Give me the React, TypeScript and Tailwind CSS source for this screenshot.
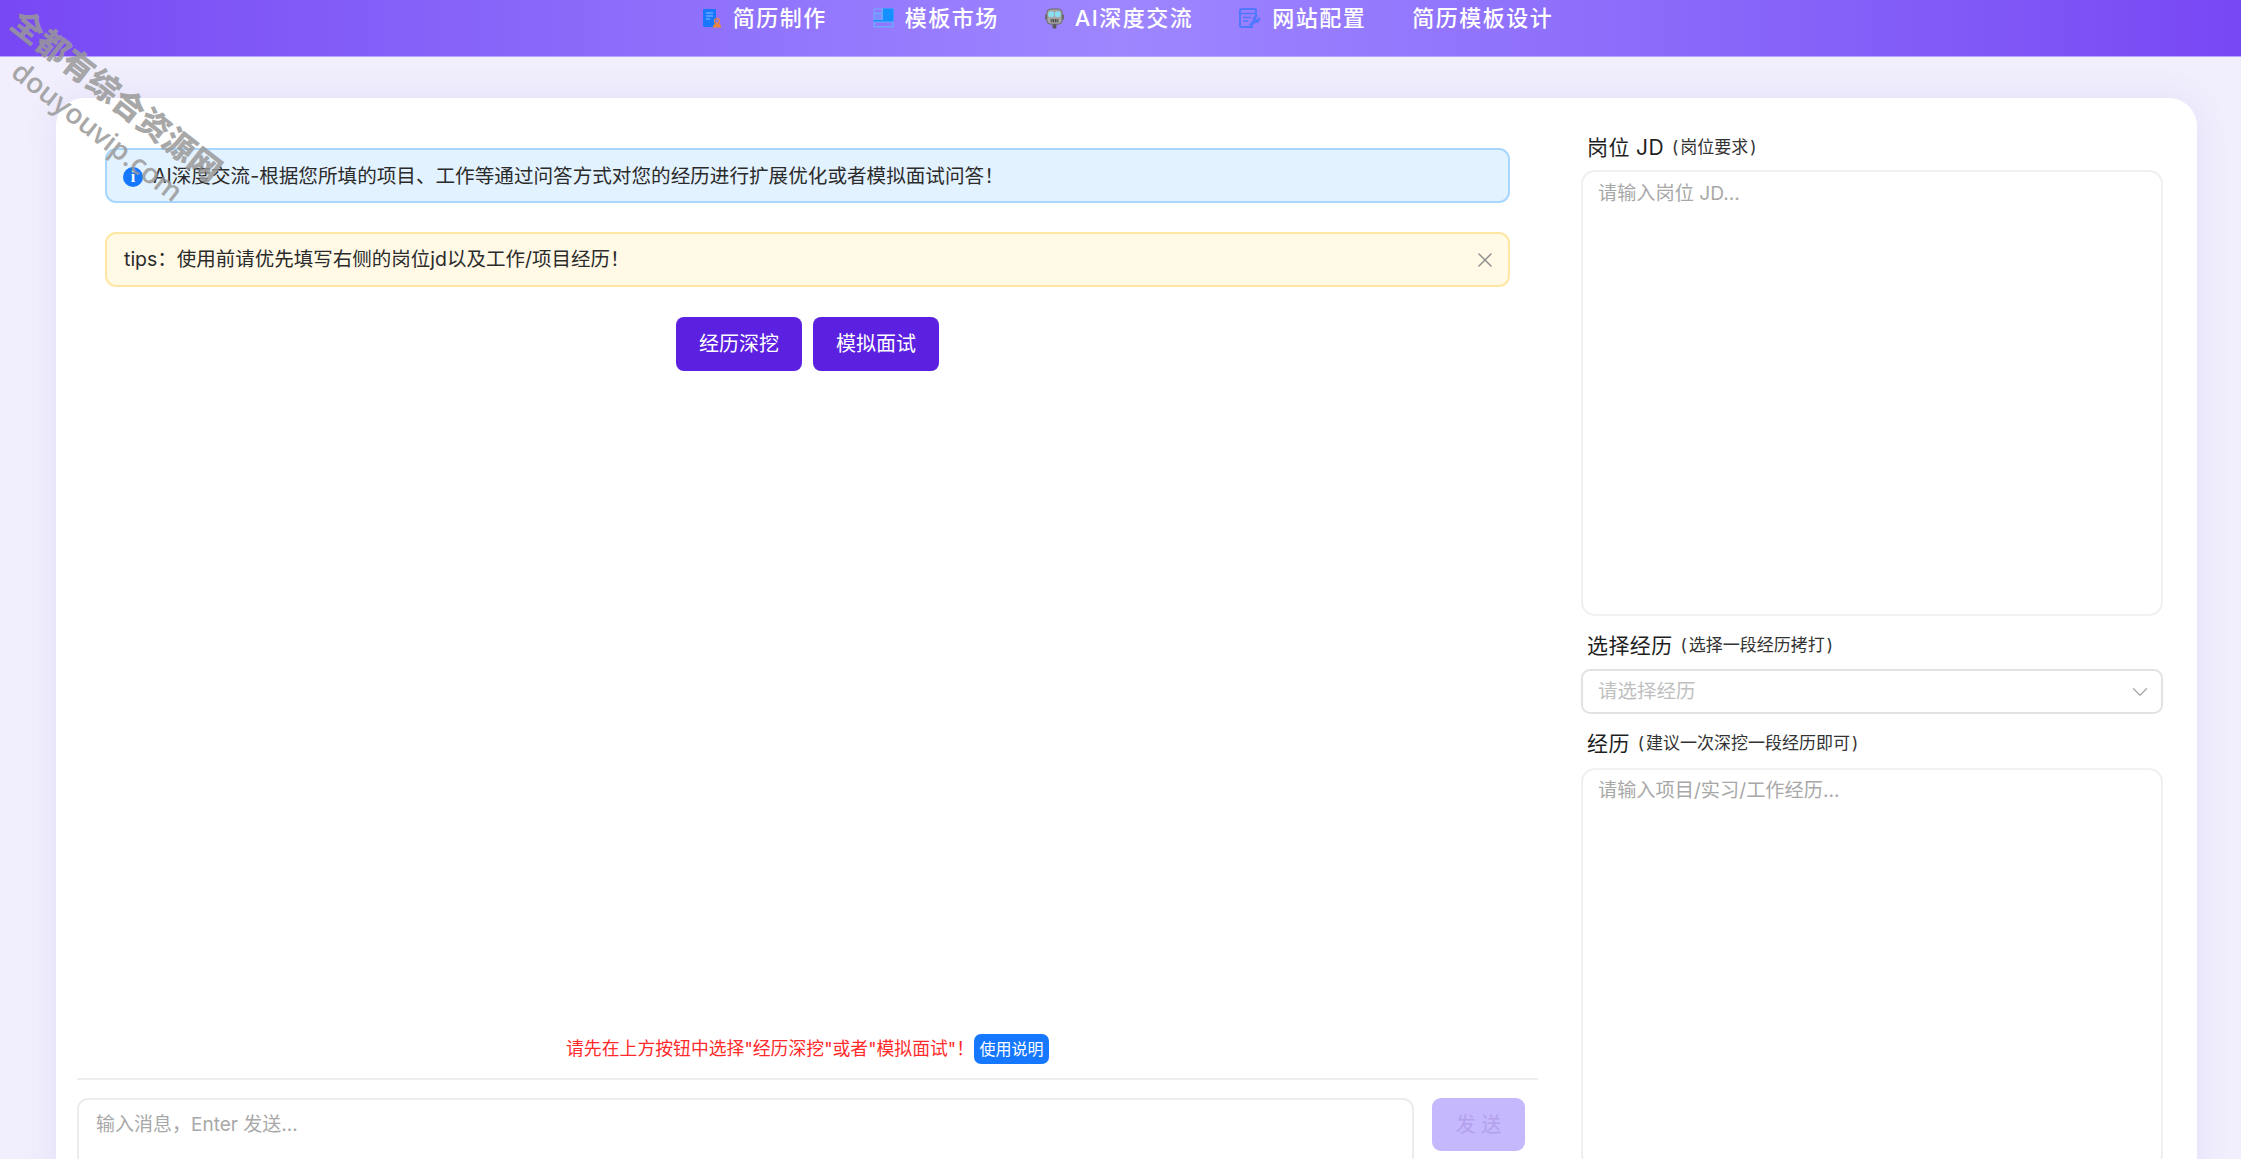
import React from 'react';
import { ChevronDown, X } from 'lucide-react';

const FONT = "font-['Inter','Noto_Sans_CJK_SC',sans-serif]";

const DocUserIcon = () => (
  <svg viewBox="0 0 20 20" className="h-[20px] w-[20px]">
    <path d="M2 1h11a1 1 0 0 1 1 1v16a1 1 0 0 1-1 1H2a1 1 0 0 1-1-1V2a1 1 0 0 1 1-1z" fill="#1677ff" />
    <path d="M4 5h7M4 8h7M4 11h4" stroke="#8fc1ff" strokeWidth="1" />
    <circle cx="15" cy="13" r="2.4" fill="none" stroke="#e8853f" strokeWidth="1.4" />
    <path d="M11 19.5v-1.2c0-1.6 1.6-2.6 4-2.6s4 1 4 2.6v1.2z" fill="#e8853f" />
  </svg>
);

const TemplateIcon = () => (
  <svg viewBox="0 0 21 20" className="h-[20px] w-[21px]">
    <rect x="0.5" y="0.5" width="20" height="19" fill="#6fa8ff" />
    <rect x="1.5" y="1.5" width="7" height="3" fill="#8f78ff" />
    <rect x="1.5" y="6" width="7" height="5.5" fill="#7f8cff" />
    <rect x="10" y="0.5" width="10.5" height="11.5" fill="#1590ff" />
    <rect x="0.5" y="12" width="20" height="1.5" fill="#1590ff" />
    <rect x="2" y="14.5" width="17" height="3.5" fill="#8f78ff" />
  </svg>
);

const RobotIcon = () => (
  <svg viewBox="0 0 20 22" className="h-[21px] w-[19px]">
    <rect x="0" y="7" width="2" height="5" fill="#6b6b6b" />
    <rect x="18" y="7" width="2" height="5" fill="#6b6b6b" />
    <rect x="2" y="1" width="16" height="16" rx="4" fill="#a6a6a6" stroke="#666666" strokeWidth="1" />
    <rect x="3.5" y="3.5" width="6" height="6" rx="2" fill="#86e0f0" />
    <rect x="10.5" y="3.5" width="6" height="6" rx="2" fill="#86e0f0" />
    <rect x="6" y="11.5" width="8" height="3.5" fill="#4a4a4a" />
    <path d="M7.5 11.5v3.5M10 11.5v3.5M12.5 11.5v3.5" stroke="#b8b8b8" strokeWidth="0.7" />
    <rect x="8" y="17" width="4" height="4.5" fill="#5a5a5a" />
  </svg>
);

const ConfigIcon = () => (
  <svg viewBox="0 0 22 21" className="h-[21px] w-[22px]" fill="none" stroke="#4f78ff" strokeWidth="2">
    <path d="M14 19H2.5A1.5 1.5 0 0 1 1 17.5v-15A1.5 1.5 0 0 1 2.5 1h13A1.5 1.5 0 0 1 17 2.5V8" />
    <path d="M1 5.5h16M4 9.5h8M4 13h5" strokeWidth="1.6" />
    <path d="M20.5 9.5l-2.5 2.3-1.6-1.6 2.2-2.4a3.6 3.6 0 0 0-4.4 4.6l-4 4.2 2 2 4.2-4a3.6 3.6 0 0 0 4.1-5.1z" fill="#4f78ff" strokeWidth="0.6" />
  </svg>
);

const navItems = [
  { icon: <DocUserIcon />, label: '简历制作' },
  { icon: <TemplateIcon />, label: '模板市场' },
  { icon: <RobotIcon />, label: 'AI深度交流' },
  { icon: <ConfigIcon />, label: '网站配置' },
  { icon: null, label: '简历模板设计' },
];

const FieldLabel = ({ title, hint }: { title: string; hint: string }) => (
  <div className="flex h-[30px] items-center gap-[8px] pl-[6px]">
    <span className="text-[21px] leading-none text-[#1f1f1f] tracking-[0.4px]">{title}</span>
    <span className="text-[17px] leading-none text-[#333333]">
      (<span className="mx-[2px]">{hint}</span>)
    </span>
  </div>
);

export default function App() {
  return (
    <div className={`relative h-screen overflow-hidden bg-[#f1effd] ${FONT}`}>
      {/* Header */}
      <header className="flex h-[57px] items-start justify-center gap-[46px] border-b border-[#b9a4fb] bg-gradient-to-r from-[#7847f4] via-[#9e86ff] to-[#7847f4] pl-[14px] pt-[6px]">
        {navItems.map((item) => (
          <div key={item.label} className="flex h-[24px] items-center gap-[11px]">
            {item.icon}
            <span className="text-[22px] font-medium leading-none tracking-[1.5px] text-white">{item.label}</span>
          </div>
        ))}
      </header>

      {/* Main card */}
      <main className="pl-[56px] pr-[44px] pt-[41px]">
        <div className="flex h-[1120px] rounded-[28px] bg-white pr-[34px] shadow-[0_0_36px_rgba(90,70,200,0.09)]">
          {/* Chat column */}
          <section className="ml-[21px] flex w-[1461px] flex-col">
            <div className="flex flex-col gap-[29px] px-[28px] pt-[50px]">
              <div className="flex h-[55px] items-center gap-[10px] rounded-[11px] border-2 border-[#a9d6ff] bg-[#e3f2ff] pl-[16px] pt-[2px] text-[19.6px] text-[#2b2b2b]">
                <span className="flex h-[20px] w-[20px] items-center justify-center rounded-full bg-[#1677ff] font-['Liberation_Serif',serif] text-[16px] font-bold text-white">
                  i
                </span>
                AI深度交流-根据您所填的项目、工作等通过问答方式对您的经历进行扩展优化或者模拟面试问答！
              </div>
              <div className="flex h-[55px] items-center justify-between rounded-[11px] border-2 border-[#ffe7a3] bg-[#fff9e6] pl-[17px] pr-[11px] pt-[1px] text-[19.5px] text-[#2b2b2b]">
                tips：使用前请优先填写右侧的岗位jd以及工作/项目经历！
                <X size={24} strokeWidth={1.4} className="text-[#8c8c8c]" />
              </div>
            </div>

            <div className="mt-[30px] flex justify-center gap-[11px]">
              <button className="h-[54px] w-[126px] rounded-[8px] bg-[#5b20e0] text-[20px] text-white">经历深挖</button>
              <button className="h-[54px] w-[126px] rounded-[8px] bg-[#5b20e0] text-[20px] text-white">模拟面试</button>
            </div>

            <div className="flex-1" />

            <div className="flex h-[30px] items-center justify-center">
              <span className="text-[17.85px] text-[#ff2a2a]">请先在上方按钮中选择"经历深挖"或者"模拟面试"！</span>
              <button className="h-[30px] w-[75px] rounded-[7px] bg-[#1677ff] text-[16px] text-white">使用说明</button>
            </div>

            <div className="mt-[14px] h-[20px] shrink-0 border-t-2 border-[#eeeeee]" />

            <div className="mb-[40px] flex gap-[18px] pr-[13px]">
              <div className="h-[80px] w-[1338px] rounded-t-[11px] border-2 border-[#ececec] px-[17px] pt-[11px] text-[19px] text-[#a8a8a8]">
                输入消息，Enter 发送...
              </div>
              <button className="h-[53px] w-[93px] rounded-[9px] bg-[#c5b8fd] text-[20px] text-[#b3a1ec]">发 送</button>
            </div>
          </section>

          {/* Right form column */}
          <aside className="ml-[43px] flex flex-1 flex-col pt-[34px]">
            <FieldLabel title="岗位 JD" hint="岗位要求" />
            <div className="mt-[8px] h-[446px] rounded-[14px] border-2 border-[#f0f0f0] px-[15px] pt-[7px] text-[19.2px] text-[#a8a8a8]">
              请输入岗位 JD...
            </div>
            <div className="mt-[14px]">
              <FieldLabel title="选择经历" hint="选择一段经历拷打" />
            </div>
            <div className="mt-[9px] flex h-[45px] items-center justify-between rounded-[9px] border-2 border-[#e2e2e2] pl-[15px] pr-[8px] text-[19.5px] text-[#bfbfbf]">
              请选择经历
              <ChevronDown size={26} strokeWidth={1.2} className="text-[#a8a8a8]" />
            </div>
            <div className="mt-[14px]">
              <FieldLabel title="经历" hint="建议一次深挖一段经历即可" />
            </div>
            <div className="mt-[10px] h-[400px] rounded-[14px] border-2 border-[#f0f0f0] px-[15px] pt-[6px] text-[19.2px] text-[#a8a8a8]">
              请输入项目/实习/工作经历...
            </div>
          </aside>
        </div>
      </main>

      {/* Watermark */}
      <div className="pointer-events-none absolute left-[25px] top-[5px] origin-top-left rotate-[38deg] text-[#999999]/85">
        <div className="whitespace-nowrap text-[32px] font-black leading-none">全都有综合资源网</div>
        <div className="mt-[8px] whitespace-nowrap pl-[31px] font-['Open_Sans',sans-serif] text-[28px] font-semibold leading-none">douyouvip.com</div>
      </div>
    </div>
  );
}
